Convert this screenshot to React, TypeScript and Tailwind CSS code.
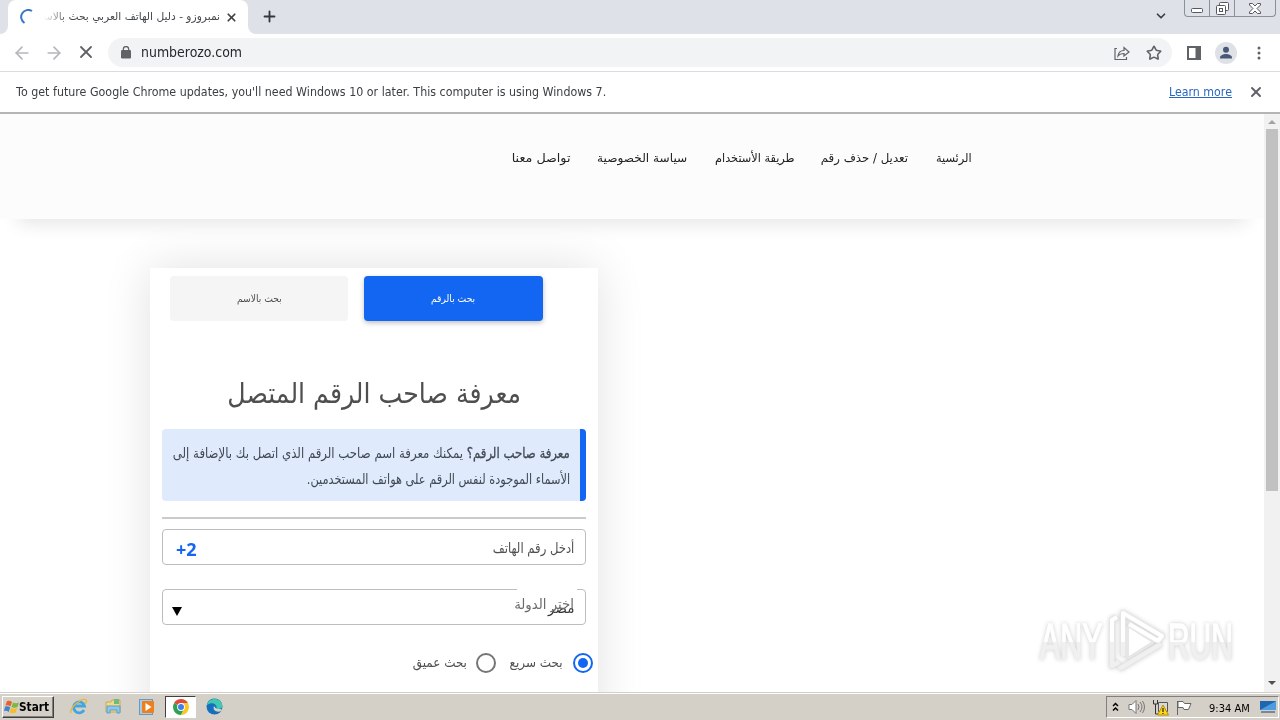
import type { ReactNode } from 'react';
import { ArrowLeft, ArrowRight, ChevronDown, Plus, Star, X } from 'lucide-react';
import { clsx } from 'clsx';

const navLinks = [
    { label: 'الرئسية', width: 'w-[37px]', scale: 'scale-x-[0.95]' },
    { label: 'تعديل / حذف رقم', width: 'w-[88px]', scale: 'scale-x-[0.98]' },
    { label: 'طريقة الأستخدام', width: 'w-[80px]', scale: 'scale-x-[0.94]' },
    { label: 'سياسة الخصوصية', width: 'w-[91px]', scale: 'scale-x-[1.01]' },
    { label: 'تواصل معنا', width: 'w-[59px]', scale: 'scale-x-[1.06]' },
];

const Line = ({ children, className, rtl, center }: { children: ReactNode; className?: string; rtl?: boolean; center?: boolean }) => (
    <span
        dir={rtl ? 'rtl' : 'ltr'}
        className={clsx('inline-block whitespace-nowrap', center ? 'origin-center' : rtl ? 'origin-right' : 'origin-left', className)}
    >
        {children}
    </span>
);

const WindowControls = () => (
    <div className="flex h-[17px] w-[92px] rounded-b-[4px] border border-t-0 border-[#8b8f96] bg-[#dee1e8] text-[#55585e]">
        <div className="flex w-[25px] items-end justify-center border-r border-[#8b8f96] pb-[3px]">
            <svg width="12" height="5"><rect x="0.5" y="0.5" width="11" height="4" rx="1" fill="#fff" stroke="currentColor" /></svg>
        </div>
        <div className="flex w-[25px] items-center justify-center border-r border-[#8b8f96]">
            <svg width="13" height="13" fill="#fff" stroke="currentColor">
                <rect x="3.5" y="0.5" width="9" height="8" rx="1" />
                <rect x="0.5" y="3.5" width="9" height="9" rx="1" />
                <rect x="3.5" y="6.5" width="3" height="3" />
            </svg>
        </div>
        <div className="flex flex-1 items-center justify-center">
            <svg width="12" height="11" fill="#fff" stroke="currentColor">
                <path d="M.5.5h3L6 3 8.500.5h3v1.500L8 5.500l3.500 3.500v1.500h-3L6 8 3.500 10.500h-3V9L4 5.500.5 2z" />
            </svg>
        </div>
    </div>
);

const TabStrip = () => (
    <div className="flex h-[34px] bg-[#dee1e8]">
        <div className="flex w-2 items-end bg-white"><div className="h-full w-2 rounded-br-lg bg-[#dee1e8]" /></div>
        <div className="flex w-[240px] items-center rounded-t-lg bg-white">
            <svg className="ml-[12px]" width="16" height="16" fill="none" stroke="#3b78c4" strokeWidth="2">
                <path d="M4.500 14A7 7 0 0 1 12 2" />
            </svg>
            <div className="ml-[8px] flex w-[176px] justify-end overflow-hidden [mask-image:linear-gradient(to_right,transparent,black_24px)]">
                <Line rtl className="scale-x-[0.97] text-[11px] text-[#45494d]">نمبروزو - دليل الهاتف العربي بحث بالاسم</Line>
            </div>
            <X className="ml-[5px] mt-[1px] size-[13px] text-[#3c4043]" strokeWidth={3.2} />
        </div>
        <div className="flex w-2 bg-white"><div className="h-full w-2 rounded-bl-lg bg-[#dee1e8]" /></div>
        <Plus className="ml-[5px] mt-[8px] size-[17px] text-[#34373c]" strokeWidth={2.6} />
        <ChevronDown className="ml-auto mr-[16px] mt-[9px] size-[14px] text-[#3c4043]" strokeWidth={3} />
        <div className="mr-[4px]"><WindowControls /></div>
    </div>
);

const Toolbar = () => (
    <div className="flex h-[38px] items-center border-b border-[#dadce0] bg-white">
        <ArrowLeft className="ml-[12px] size-[20px] text-[#b4b6b9]" strokeWidth={2} />
        <ArrowRight className="ml-[12px] size-[20px] text-[#b4b6b9]" strokeWidth={2} />
        <X className="ml-[12px] mb-px size-[20px] text-[#5f6368]" strokeWidth={2.2} />
        <div className="ml-[12px] flex h-[29px] flex-1 items-center rounded-full bg-[#f1f3f4] text-[#5f6368]">
            <svg className="ml-[13px]" width="10" height="13">
                <rect y="4" width="10" height="8.500" rx="1.200" fill="#5f6368" />
                <path d="M2.300 4.500V3.200a2.700 2.700 0 0 1 5.400 0v1.300" fill="none" stroke="#5f6368" strokeWidth="1.300" />
            </svg>
            <Line className="ml-[10px] scale-x-[0.895] text-[14px] text-[#25292d]">numberozo.com</Line>
            <svg className="ml-auto" width="16" height="16" fill="none" stroke="#5f6368" strokeWidth="1.200">
                <path d="M3 3.500H1v11h11.500v-2.500M4 11c.5-4 2.500-5.500 6-5.500V2.500l5 4.500-5 4V8.500c-3 0-4.500.5-6 2.500z" />
            </svg>
            <Star className="ml-[16px] mr-[10px] size-[16px]" strokeWidth={2.4} />
        </div>
        <svg className="ml-[15px]" width="14" height="14"><path d="M1 1h12v12H1zM9.500 1v12" fill="none" stroke="#5f6368" strokeWidth="2" /><path d="M9 1h4v12H9z" fill="#5f6368" /></svg>
        <svg className="ml-[14px]" width="22" height="22">
            <circle cx="11" cy="11" r="11" fill="#dee1e6" />
            <circle cx="11" cy="7.800" r="3" fill="#4a5878" />
            <path d="M5 16.500v-1c0-2.300 3.500-3.500 6-3.500s6 1.200 6 3.500v1z" fill="#4a5878" />
        </svg>
        <svg className="ml-[20px] mr-[19px]" width="4" height="14" fill="#5f6368">
            <circle cx="2" cy="2" r="1.500" /><circle cx="2" cy="7" r="1.500" /><circle cx="2" cy="12" r="1.500" />
        </svg>
    </div>
);

const InfoBar = () => (
    <div className="flex h-[42px] items-center border-b-2 border-[#b5b5b5] bg-white text-[12px] text-[#3c4043]">
        <Line className="ml-[16px] scale-x-[0.925]">To get future Google Chrome updates, you'll need Windows 10 or later. This computer is using Windows 7.</Line>
        <div className="ml-auto w-[63px]">
            <Line className="scale-x-[0.92] text-[#2a66c0] underline">Learn more</Line>
        </div>
        <X className="ml-[16px] mr-[16px] size-[16px] text-[#5f6368]" strokeWidth={3} />
    </div>
);

const Radio = ({ checked }: { checked?: boolean }) => (
    <div className={clsx('flex size-5 items-center justify-center rounded-full border-2', checked ? 'border-[#1266f1]' : 'border-[#757575]')}>
        {checked && <div className="size-[10px] rounded-full bg-[#1266f1]" />}
    </div>
);

const SearchCard = () => (
    <div dir="rtl" className="h-[500px] w-[448px] bg-white text-[#4f4f4f] shadow-[0_0_45px_rgba(0,0,0,0.12)]">
        <div className="flex gap-4 pr-[55px] pt-2 text-[10px]">
            <div className="flex h-[45px] w-[179px] items-center justify-center rounded-[4px] bg-[#1266f1] text-white shadow-[0_2px_5px_rgba(0,0,0,0.25)]">
                <Line rtl center className="scale-x-[0.92]">بحث بالرقم</Line>
            </div>
            <div className="flex h-[45px] w-[178px] items-center justify-center rounded-[4px] bg-[#f5f5f5]">
                <Line rtl center className="scale-x-[0.92]">بحث بالاسم</Line>
            </div>
        </div>
        <h1 className="mt-[52px] flex h-[42px] justify-center text-[28px] leading-[42px]">
            <Line rtl center className="scale-x-[0.9]">معرفة صاحب الرقم المتصل</Line>
        </h1>
        <div className="mx-3 mt-[14px] h-[72px] rounded-[4px] border-r-[6px] border-[#1266f1] bg-[#dfebfc] pr-[10px] pt-[11px] text-[14px] leading-[26px] text-[#404852]">
            <div className="h-[26px]">
                <Line rtl className="scale-x-[0.838]"><b className="font-normal [-webkit-text-stroke:0.3px]">معرفة صاحب الرقم؟</b> يمكنك معرفة اسم صاحب الرقم الذي اتصل بك بالإضافة إلى</Line>
            </div>
            <div className="h-[26px]">
                <Line rtl className="scale-x-[0.81]">الأسماء الموجودة لنفس الرقم على هواتف المستخدمين.</Line>
            </div>
        </div>
        <div className="mx-3 mt-4 h-[2px] bg-[#cbcbcb]" />
        <div className="mx-3 mt-[10px] flex h-[36px] items-center justify-between rounded-[4px] border border-[#bdbdbd] pl-[13px] pr-[11px]">
            <Line rtl className="scale-x-[0.83] pt-[3px] text-[14px]">أدخل رقم الهاتف</Line>
            <Line className="scale-x-[1.06] pt-[6px] font-['Noto_Sans'] text-[17px] font-bold text-[#1266f1]">+2</Line>
        </div>
        <div className="relative mx-3 mt-6 flex h-[36px] items-center justify-between rounded-[4px] border border-[#bdbdbd] pl-[9px] pr-[11px]">
            <Line rtl className="scale-x-[0.96] pt-[3px] text-[14px] text-[#333]">مصر</Line>
            <svg className="mt-[8px]" width="10" height="9"><path d="M0 0h10L5 9z" fill="#000" /></svg>
            {/* floating label notch and label */}
            <div className="absolute right-[8px] top-[-1px] h-px w-[60px] bg-white" />
            <Line rtl className="absolute right-[11px] top-[4px] scale-x-[0.95] text-[14px] text-[#6b6b6b]">اختر الدولة</Line>
        </div>
        <div className="mt-[28px] flex items-center pr-[5px] text-[13px]">
            <Radio checked />
            <div className="mr-[10px] h-5 w-[54px]"><Line rtl className="scale-x-[0.92]">بحث سريع</Line></div>
            <div className="mr-[13px]"><Radio /></div>
            <div className="mr-[9px] h-5"><Line rtl className="scale-x-[0.92]">بحث عميق</Line></div>
        </div>
    </div>
);

const ScrollBar = () => (
    <div className="flex w-4 flex-col items-center bg-[#f1f1f1]">
        <svg className="mt-[6px]" width="8" height="4"><path d="M0 4l4-4 4 4z" fill="#a3a3a3" /></svg>
        <div className="mt-[5px] h-[362px] w-[12px] bg-[#c1c1c1]" />
        <svg className="mb-[7px] mt-auto" width="8" height="4"><path d="M0 0l4 4 4-4z" fill="#505050" /></svg>
    </div>
);

const Watermark = () => (
    <svg className="absolute left-[1030px] top-[492px] drop-shadow-[0_0_2px_rgba(0,0,0,0.2)]" width="215" height="74" viewBox="0 -4 215 74">
        <defs>
            <linearGradient id="fade" x1="0" y1="0" x2="0" y2="70" gradientUnits="userSpaceOnUse">
                <stop offset="0.46" stopColor="#fff" />
                <stop offset="0.46" stopColor="#f0f0f0" />
            </linearGradient>
        </defs>
        <g fill="url(#fade)" stroke="url(#fade)" strokeWidth="1.4" fontFamily="Liberation Sans" fontSize="50">
            <text x="0" y="49" transform="translate(10) scale(.6 1)" textLength="104" lengthAdjust="spacingAndGlyphs">ANY</text>
            <text x="0" y="49" transform="translate(138) scale(.6 1)" textLength="108" lengthAdjust="spacingAndGlyphs">RUN</text>
        </g>
        <g fill="none" strokeLinejoin="round">
            <g stroke="#e6e6e6" strokeWidth="6">
                <path d="M87 7l-5 3v46l7-4M93 46V3l39 23-4 5-29-17M89 59l42-25M99 46l22-14-22-14z" />
            </g>
            <g stroke="url(#fade)" strokeWidth="4">
                <path d="M87 7l-5 3v46l7-4M93 46V3l39 23-4 5-29-17M89 59l42-25" />
            </g>
            <path d="M99 46l22-14-22-14z" fill="#fff" />
        </g>
    </svg>
);

const Page = () => (
    <div className="relative flex h-[578px] overflow-hidden bg-white">
        <div className="flex-1">
            <div dir="rtl" className="flex h-[105px] gap-[26.500px] bg-[#fcfcfc] pr-[292px] pt-[35px] text-[12px] text-[#222] shadow-[0_22px_18px_-18px_rgba(0,0,0,0.11)]">
                {navLinks.map((link) => (
                    <div key={link.label} className={link.width}>
                        <Line rtl className={link.scale}>{link.label}</Line>
                    </div>
                ))}
            </div>
            <div className="ml-[150px] mt-[49px]"><SearchCard /></div>
        </div>
        <ScrollBar />
        <Watermark />
    </div>
);

const TaskBar = () => (
    <div className="flex h-7 items-center border-t border-[#d4d0c8] bg-[#d4d0c8] shadow-[inset_0_1px_0_#fff]">
        <div className="ml-[2px] mt-[1px] flex h-[22px] w-[52px] items-center border border-b-[#404040] border-l-white border-r-[#404040] border-t-white shadow-[inset_-1px_-1px_0_#808080]">
            <svg className="ml-px" width="16" height="16">
                <path d="M3 2q3-1 5 1L6.500 7.500q-2.500-2-5-1z" fill="#e8622c" />
                <path d="M9 3.500q3 1.500 6 0L13.500 8q-3 1.500-6 0z" fill="#7db942" />
                <path d="M1.200 7.500q3-1 5 1L4.700 13q-2-2-4.700-1z" fill="#3f83cf" />
                <path d="M7.200 9q3 1.500 6 0l-1.500 4.500q-3 1.500-6 0z" fill="#f6bd27" />
            </svg>
            <Line className="scale-x-[0.88] text-[12px] font-bold text-black">Start</Line>
        </div>
        <svg className="ml-[16px]" width="18" height="18" fill="none">
            <path d="M14 12a5.500 5.500 0 1 1 .5-4H5" stroke="#42a5df" strokeWidth="2.800" />
            <path d="M1 15C-1 10 12-1 16 2c1 1 0 3-1 4" stroke="#e8b63d" strokeWidth="1.400" />
        </svg>
        <svg className="ml-[17px]" width="17" height="17">
            <path d="M1 4h5l1-2h8v12H1z" fill="#efd98b" stroke="#c8ac55" />
            <path d="M9 1h5v5H9z" fill="#6dbb82" />
            <path d="M2 8h13v7h-3v-3H5v3H2z" fill="#8ec7e8" stroke="#5b9fc8" />
        </svg>
        <svg className="ml-[17px]" width="16" height="16">
            <rect x="0.5" y="0.5" width="13" height="15" fill="#a6cbe9" stroke="#6a99be" />
            <rect x="3" y="2" width="12" height="12" rx="1" fill="#ef7f1a" />
            <path d="M6.500 4v8l6-4z" fill="#fff" />
        </svg>
        <div className="ml-[10px] flex h-[22px] w-[31px] items-center justify-center border border-b-white border-l-[#404040] border-r-white border-t-[#404040] bg-white">
            <svg width="16" height="16" viewBox="0 0 16 16">
                <path d="M8 8L1.100 4A8 8 0 0 1 14.900 4z" fill="#df4a39" />
                <path d="M8 8L1.100 4A8 8 0 0 0 8 16l3.500-6z" fill="#2fa152" />
                <path d="M8 8h3.500L8 16A8 8 0 0 0 14.900 4H8z" fill="#f8c828" />
                <circle cx="8" cy="8" r="3.900" fill="#fff" />
                <circle cx="8" cy="8" r="3" fill="#3f7fe8" />
            </svg>
        </div>
        <svg className="ml-[10px]" width="17" height="17">
            <circle cx="8.500" cy="8.500" r="8" fill="#1470bd" />
            <path d="M1 7C2 0 15-2 16.500 8c0 3-5 4-6 2 1-3-4-7-9.500-3z" fill="#42c8b0" />
            <path d="M8 8c-2 4 3 7 7 5l1.500-1C14 10 10 12 8 8z" fill="#d4d0c8" />
        </svg>
        <div className="ml-auto mr-px mt-px flex h-[22px] w-[173px] items-center border border-b-white border-l-[#808080] border-r-white border-t-[#808080]">
            <svg className="ml-[5px]" width="7" height="10" fill="none" stroke="#000" strokeWidth="1.500"><path d="M1 4l2.500-2.500L6 4M1 8.500L3.500 6 6 8.500" /></svg>
            <svg className="ml-[9px]" width="18" height="16" fill="none" stroke="#777">
                <path d="M1 5.500h3l4-4v13l-4-4H1z" fill="#fff" />
                <path d="M10 5q2 3 0 6M12 3q4 5 0 10M14.500 2q4 6 0 12" />
            </svg>
            <svg className="ml-[6px]" width="17" height="17">
                <path d="M6.500 3.500h9v9h-9z" fill="#d9d9d9" stroke="#555" />
                <path d="M1.500 1v4h4V1M3.500 5v10h5" fill="none" stroke="#333" />
                <path d="M11 6l5.500 10h-11z" fill="#ffd51d" stroke="#b89000" />
                <path d="M11 9v4M11 14v1" stroke="#000" />
            </svg>
            <svg className="ml-[7px]" width="17" height="16" fill="#fff" stroke="#666"><path d="M1.500 16V2M2 2.500h5l1.500 2H15l-2.500 6H8l-1-2H2z" /></svg>
            <div className="ml-[16px] w-[51px]"><Line className="scale-x-[0.9] text-[11px] text-black">9:34 AM</Line></div>
            <svg width="16" height="14"><path d="M0 1h16v9H0z" fill="#1e66b0" /><path d="M0 10L16 1v9z" fill="#4d9be0" /><path d="M1 12h14" stroke="#1c3f68" /></svg>
        </div>
    </div>
);

const App = () => (
    <div className="h-[720px] w-[1280px] overflow-hidden bg-white font-['DejaVu_Sans',sans-serif]">
        <TabStrip />
        <Toolbar />
        <InfoBar />
        <Page />
        <TaskBar />
    </div>
);

export default App;
